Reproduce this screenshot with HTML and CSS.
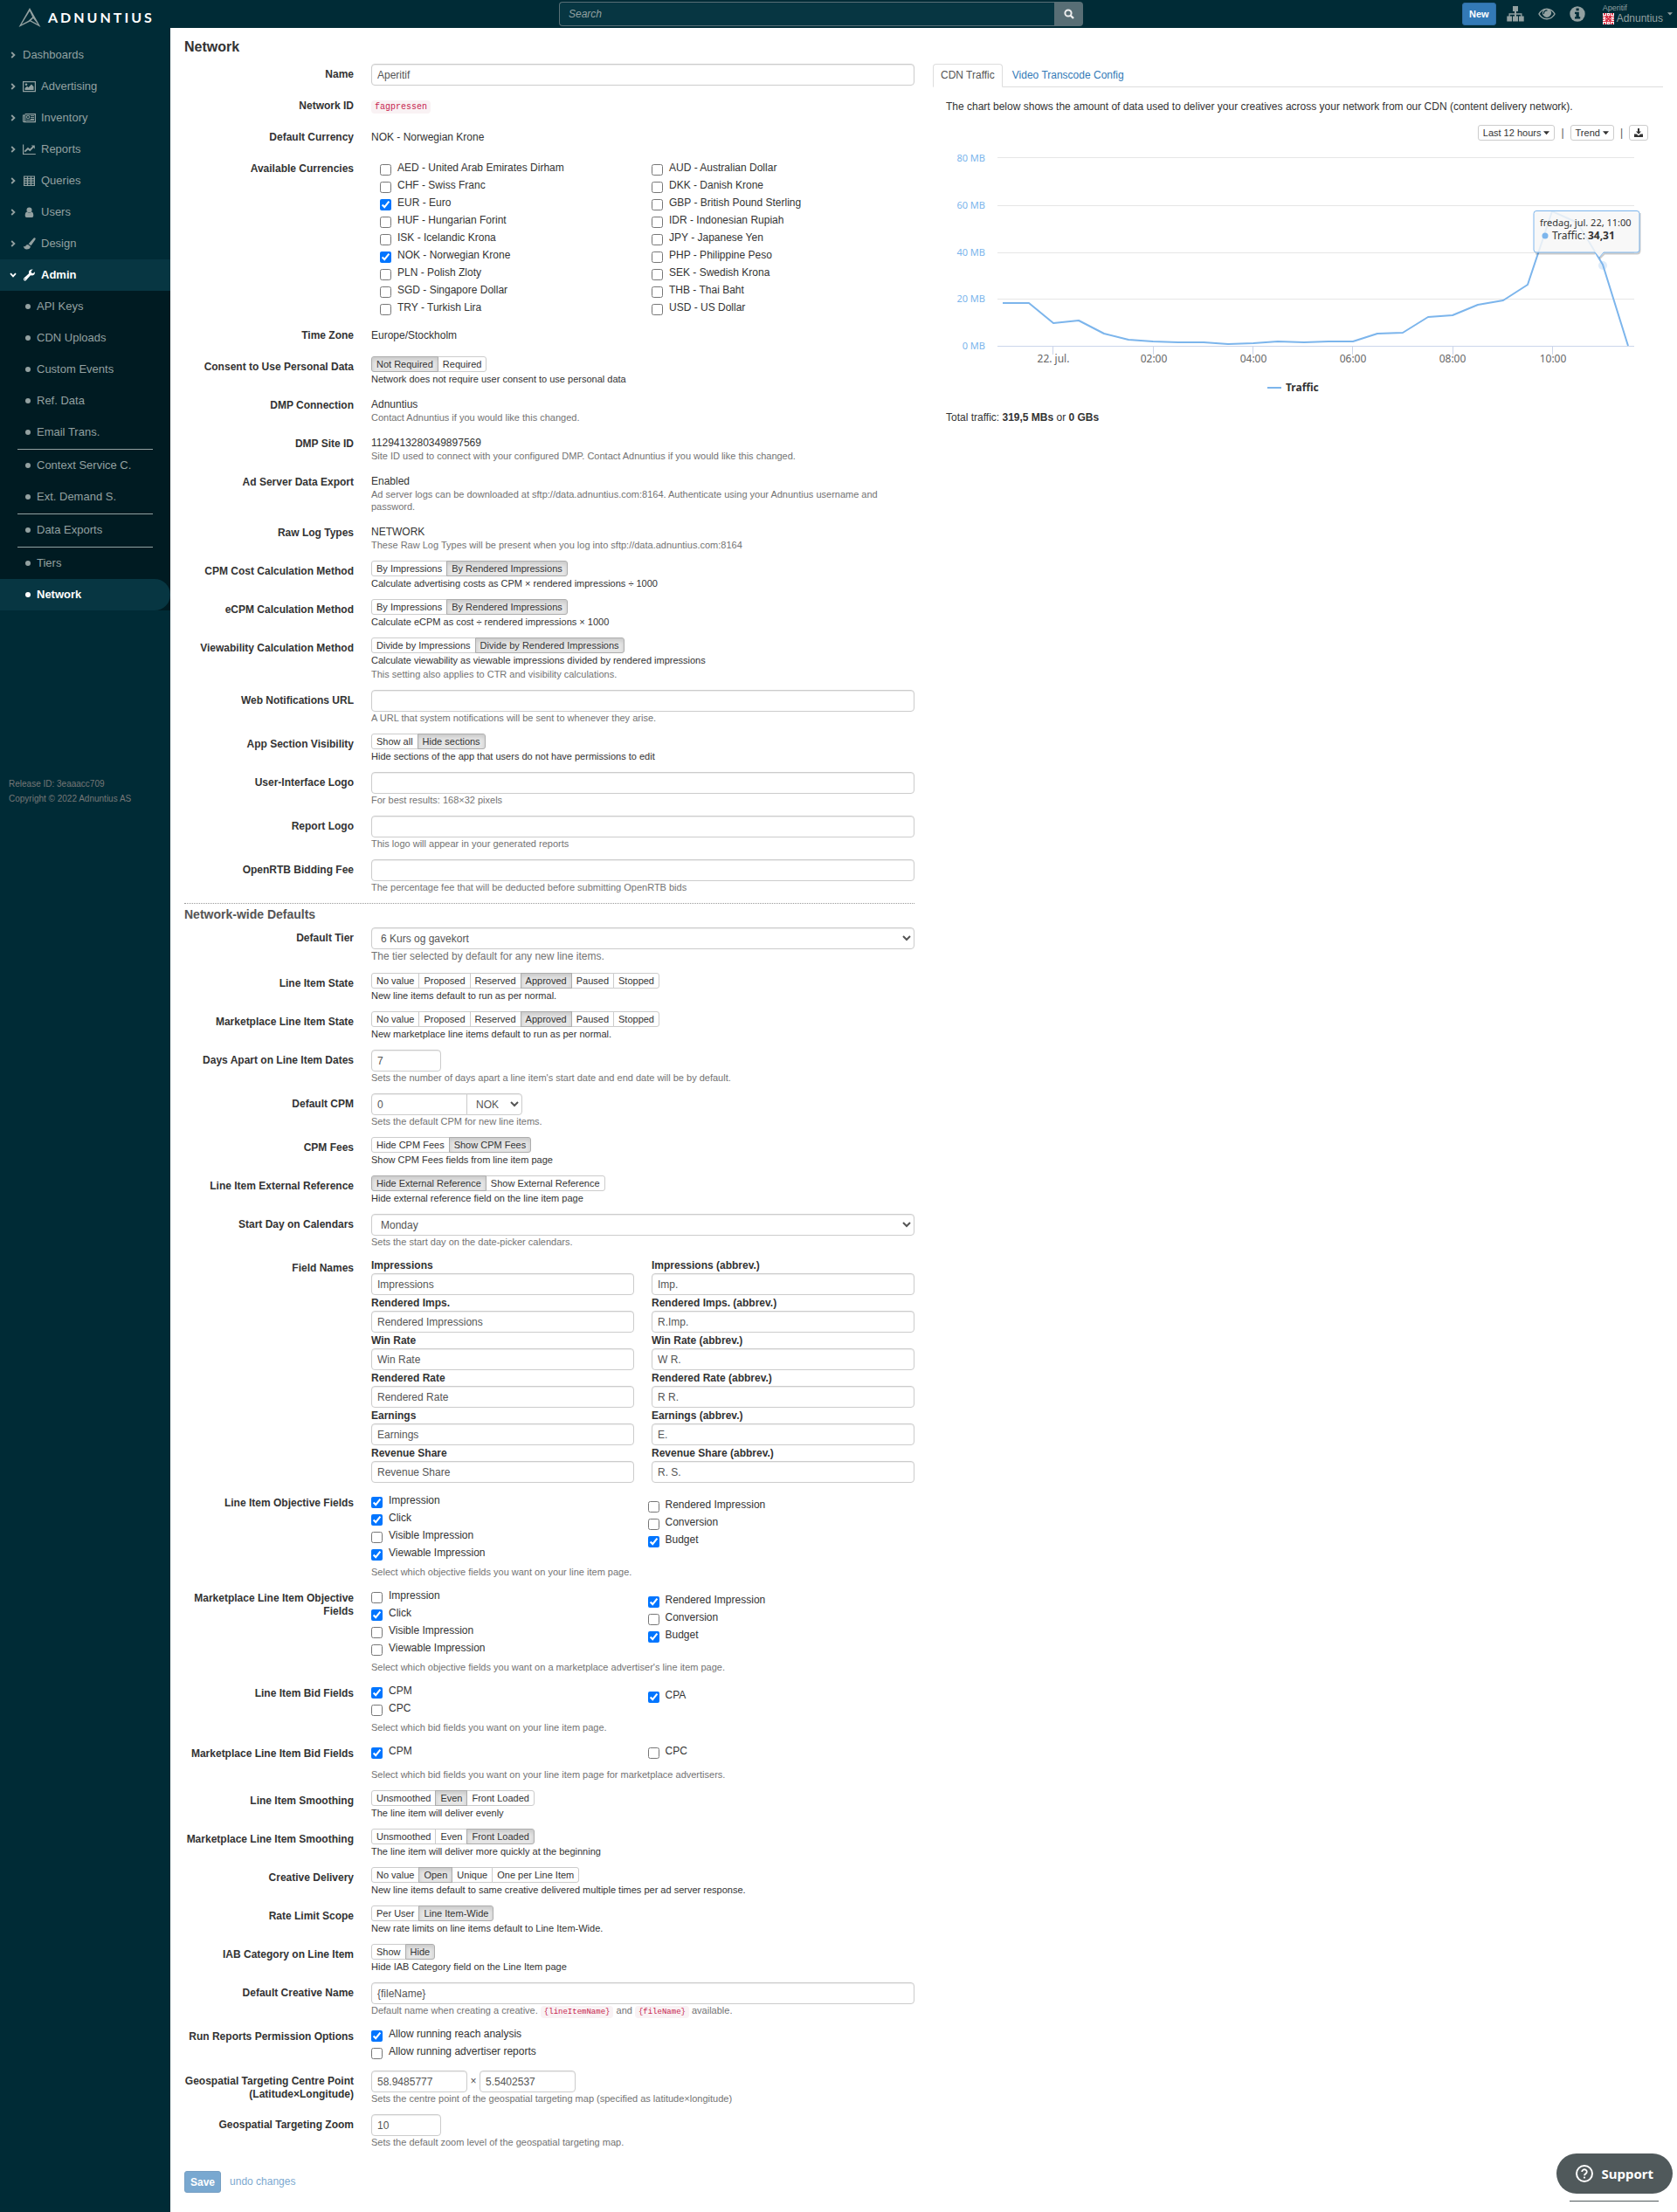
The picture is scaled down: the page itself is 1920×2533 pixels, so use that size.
FILE: index.html
```html
<!DOCTYPE html>
<html lang="en">
<head>
<meta charset="utf-8">
<title>Network - Adnuntius</title>
<meta name="viewport" content="width=device-width, initial-scale=1">
<link rel="stylesheet" href="styles.css">
</head>
<body>
<svg class="defs" aria-hidden="true">
  <symbol id="chev" viewBox="0 0 6 8"><path d="M1.2 1 L4.4 4 L1.2 7" fill="none" stroke="currentColor" stroke-width="1.8"/></symbol>
  <symbol id="caret" viewBox="0 0 8 5"><path d="M0 0h8L4 4.5z" fill="currentColor"/></symbol>
</svg>

<header class="topbar">
  <a class="brand" href="#">
    <svg class="brand-mark" viewBox="0 0 28 24" aria-hidden="true"><path d="M14 1 L1.500 23 L14.500 16.500 L26.500 23 Z M14 4.800 L4.600 20 L12.500 15.800 L17.200 11.400 Z M18 13 L15.400 15.400 L23.400 19.800 Z" fill="#93a1a1" fill-rule="evenodd"/></svg>
    <span class="brand-name">ADNUNTIUS</span>
  </a>
  <form class="search" role="search">
    <input class="search-input" type="text" placeholder="Search" aria-label="Search">
    <button class="search-btn" type="button" aria-label="Search"><svg width="12" height="12" viewBox="0 0 12 12" aria-hidden="true"><circle cx="5" cy="5" r="3.600" fill="none" stroke="currentColor" stroke-width="2"/><path d="M7.500 7.500 L11 11" stroke="currentColor" stroke-width="2.400"/></svg></button>
  </form>
  <nav class="tools" aria-label="Tools">
    <button class="btn-new" type="button">New</button>
    <a class="tool" href="#" aria-label="Site map"><svg width="20" height="18" viewBox="0 0 20 18" aria-hidden="true"><path fill="currentColor" d="M7 0h6v6h-2v2.300h6.500v3.200H19.700V17.500H14v-6h2.200V9.700H11v1.800h2V17.500H7V11.500h2V9.700H3.800v1.800H6V17.500H.3V11.500H2.500V8.300H9V6H7z"/></svg></a>
    <a class="tool" href="#" aria-label="Preview"><svg width="20" height="14" viewBox="0 0 20 14" aria-hidden="true"><path fill="currentColor" fill-rule="evenodd" d="M10 .5C5.500 .5 2 3.500 .2 7c1.800 3.500 5.300 6.500 9.800 6.500S18 10.500 19.800 7C18 3.500 14.500 .5 10 .5zM10 12C6.500 12 3.500 10 1.800 7c1-1.700 2.300-3 4-3.900A5 5 0 1 0 14.200 3.100c1.700.9 3 2.200 4 3.900-1.700 3-4.700 5-8.200 5zM10 2.300a.6.600 0 1 1 0 1.200C8.300 3.500 7 4.800 7 6.500a.6.600 0 1 1-1.200 0C5.800 4.200 7.700 2.300 10 2.300z"/></svg></a>
    <a class="tool" href="#" aria-label="Information"><svg width="18" height="18" viewBox="0 0 18 18" aria-hidden="true"><circle cx="9" cy="9" r="8.700" fill="currentColor"/><path fill="#002b36" d="M7.500 2.600h3.200v2.700H7.500zM6 6.700h4.800v5.500h1.400v2.300H6v-2.300h1.400V9H6z"/></svg></a>
    <a class="account" href="#">
      <span class="account-text">
        <span class="account-net">Aperitif</span>
        <span class="account-user"><svg width="13" height="13" viewBox="0 0 13 13" aria-hidden="true"><path fill="#fff" d="M0 0h13v13H0z"/><g fill="#d9364a"><path d="M3 3h7v7H3z"/><path d="M1 0h2v2H1zM4 0h1v3H4zM8 0h1v3H8zM10 0h2v2h-2zM0 3h3v1H0zM10 3h3v1h-3zM0 5h2v1H0zM11 5h2v1h-2zM0 7h2v1H0zM11 7h2v1h-2zM0 9h3v1H0zM10 9h3v1h-3zM1 11h2v2H1zM4 10h1v3H4zM8 10h1v3H8zM10 11h2v2h-2zM6 1h1v1H6zM6 11h1v1H6z"/></g><path fill="#fff" d="M6 4h1v1H6zM4 6h1v1H4zM8 6h1v1H8zM6 8h1v1H6z" opacity=".8"/></svg>Adnuntius</span>
      </span>
      <svg class="account-caret" width="6" height="4" aria-hidden="true"><use href="#caret"/></svg>
    </a>
  </nav>
</header>

<div class="shell">
<aside class="sidebar">
  <nav aria-label="Main">
  <ul class="menu">
    <li><a href="#"><svg class="chev"><use href="#chev"/></svg>Dashboards</a></li>
    <li><a href="#"><svg class="chev"><use href="#chev"/></svg><svg class="ico" viewBox="0 0 15 14"><path d="M.6 1.600h13.800v11H.6z" fill="none" stroke="currentColor" stroke-width="1.200"/><circle cx="4" cy="4.800" r="1.300" fill="currentColor"/><path fill="currentColor" d="M2.500 11V9L5 6.700l1.500 1.500L10 4.500l2.500 2.700V11z"/></svg>Advertising</a></li>
    <li><a href="#"><svg class="chev"><use href="#chev"/></svg><svg class="ico" viewBox="0 0 15 14"><path d="M2.600 2.600h11.800v9H1.600Q.6 11.600 .6 10.600V4h2v7" fill="none" stroke="currentColor" stroke-width="1.200"/><path d="M4.600 4.600h3v2.800h-3zM9 4.600h4M9 6.600h4M9 8.400h4M4 9.600h9" fill="none" stroke="currentColor"/></svg>Inventory</a></li>
    <li><a href="#"><svg class="chev"><use href="#chev"/></svg><svg class="ico" viewBox="0 0 15 14"><path d="M.6 1.500v11h14.200" fill="none" stroke="currentColor" stroke-width="1.200"/><path d="M2.300 9.700L6 6l2.300 2L12 4.200" fill="none" stroke="currentColor" stroke-width="1.900"/><path fill="currentColor" d="M9.800 2.500h4v4z"/></svg>Reports</a></li>
    <li><a href="#"><svg class="chev"><use href="#chev"/></svg><svg class="ico" viewBox="0 0 15 14"><path d="M1.600 2h11.800v10.500H1.600zM1.600 4.600h11.800M1.600 7.200h11.800M1.600 9.800h11.800M5.500 2v10.500M9.500 2v10.500" fill="none" stroke="currentColor" stroke-width="1.200"/></svg>Queries</a></li>
    <li><a href="#"><svg class="chev"><use href="#chev"/></svg><svg class="ico" viewBox="0 0 15 14"><circle cx="7.500" cy="4.500" r="3" fill="currentColor"/><path fill="currentColor" d="M5 6.600Q2.700 7 2.700 11q0 2 1.800 2h6q1.800 0 1.800-2Q12.300 7 10 6.600Q7.500 9 5 6.600z"/></svg>Users</a></li>
    <li><a href="#"><svg class="chev"><use href="#chev"/></svg><svg class="ico" viewBox="0 0 15 14"><path fill="currentColor" d="M14.300.4q.8.800 0 2L9.500 9.300 6.700 7.200 12.700.6q.8-.7 1.600-.2zM6 7.900l2.900 2.300Q8.500 13.500 4.500 13.500 1.300 13.400 .8 9.800q1.400 1 2.200.2Q4 8 6 7.900z"/></svg>Design</a></li>
    <li class="open"><a href="#"><svg class="chev down"><use href="#chev"/></svg><svg class="ico" viewBox="0 0 15 14"><path fill="currentColor" fill-rule="evenodd" d="M14 3.200Q14.200 8 9 7.300L3.600 13.200Q2.500 14 1.400 12.900T1.300 10.500L7 5.300Q6.200 .3 11.700.5L9.600 2.600 9.900 4.600 11.900 4.900zM2.700 11a.7.700 0 1 0 .1 1.200z"/></svg>Admin</a>
      <ul class="submenu">
        <li><a href="#">API Keys</a></li>
        <li><a href="#">CDN Uploads</a></li>
        <li><a href="#">Custom Events</a></li>
        <li><a href="#">Ref. Data</a></li>
        <li class="ruled"><a href="#">Email Trans.</a></li>
        <li><a href="#">Context Service C.</a></li>
        <li class="ruled"><a href="#">Ext. Demand S.</a></li>
        <li class="ruled"><a href="#">Data Exports</a></li>
        <li><a href="#">Tiers</a></li>
        <li class="current"><a href="#" aria-current="page">Network</a></li>
      </ul>
    </li>
  </ul>
  </nav>
  <p class="release">Release ID: 3eaaacc709<br>Copyright © 2022 Adnuntius AS</p>
</aside>

<main class="main">
<h1>Network</h1>
<div class="columns">
<form class="form">
  <div class="row"><label class="name" for="f-name">Name</label><div><input id="f-name" class="text" type="text" value="Aperitif"></div></div>
  <div class="row"><span class="name">Network ID</span><div class="static"><code>fagpressen</code></div></div>
  <div class="row"><span class="name">Default Currency</span><div class="static">NOK - Norwegian Krone</div></div>
  <div class="row"><span class="name">Available Currencies</span>
    <div class="currencies">
      <label class="check"><input type="checkbox">AED - United Arab Emirates Dirham</label>
      <label class="check"><input type="checkbox">AUD - Australian Dollar</label>
      <label class="check"><input type="checkbox">CHF - Swiss Franc</label>
      <label class="check"><input type="checkbox">DKK - Danish Krone</label>
      <label class="check"><input type="checkbox" checked>EUR - Euro</label>
      <label class="check"><input type="checkbox">GBP - British Pound Sterling</label>
      <label class="check"><input type="checkbox">HUF - Hungarian Forint</label>
      <label class="check"><input type="checkbox">IDR - Indonesian Rupiah</label>
      <label class="check"><input type="checkbox">ISK - Icelandic Krona</label>
      <label class="check"><input type="checkbox">JPY - Japanese Yen</label>
      <label class="check"><input type="checkbox" checked>NOK - Norwegian Krone</label>
      <label class="check"><input type="checkbox">PHP - Philippine Peso</label>
      <label class="check"><input type="checkbox">PLN - Polish Zloty</label>
      <label class="check"><input type="checkbox">SEK - Swedish Krona</label>
      <label class="check"><input type="checkbox">SGD - Singapore Dollar</label>
      <label class="check"><input type="checkbox">THB - Thai Baht</label>
      <label class="check"><input type="checkbox">TRY - Turkish Lira</label>
      <label class="check"><input type="checkbox">USD - US Dollar</label>
    </div></div>
  <div class="row"><span class="name">Time Zone</span><div class="static">Europe/Stockholm</div></div>
  <div class="row"><span class="name">Consent to Use Personal Data</span><div>
    <div class="seg" role="group" aria-label="Consent to Use Personal Data"><button type="button" class="on" aria-pressed="true">Not Required</button><button type="button">Required</button></div>
    <p class="desc">Network does not require user consent to use personal data</p></div></div>
  <div class="row"><span class="name">DMP Connection</span><div><div class="value">Adnuntius</div><p class="help">Contact Adnuntius if you would like this changed.</p></div></div>
  <div class="row"><span class="name">DMP Site ID</span><div><div class="value">1129413280349897569</div><p class="help">Site ID used to connect with your configured DMP. Contact Adnuntius if you would like this changed.</p></div></div>
  <div class="row"><span class="name">Ad Server Data Export</span><div><div class="value">Enabled</div><p class="help">Ad server logs can be downloaded at sftp://data.adnuntius.com:8164. Authenticate using your Adnuntius username and password.</p></div></div>
  <div class="row"><span class="name">Raw Log Types</span><div><div class="value">NETWORK</div><p class="help">These Raw Log Types will be present when you log into sftp://data.adnuntius.com:8164</p></div></div>
  <div class="row"><span class="name">CPM Cost Calculation Method</span><div>
    <div class="seg" role="group" aria-label="CPM Cost Calculation Method"><button type="button">By Impressions</button><button type="button" class="on" aria-pressed="true">By Rendered Impressions</button></div>
    <p class="desc">Calculate advertising costs as CPM × rendered impressions ÷ 1000</p></div></div>
  <div class="row"><span class="name">eCPM Calculation Method</span><div>
    <div class="seg" role="group" aria-label="eCPM Calculation Method"><button type="button">By Impressions</button><button type="button" class="on" aria-pressed="true">By Rendered Impressions</button></div>
    <p class="desc">Calculate eCPM as cost ÷ rendered impressions × 1000</p></div></div>
  <div class="row"><span class="name">Viewability Calculation Method</span><div>
    <div class="seg" role="group" aria-label="Viewability Calculation Method"><button type="button">Divide by Impressions</button><button type="button" class="on" aria-pressed="true">Divide by Rendered Impressions</button></div>
    <p class="desc">Calculate viewability as viewable impressions divided by rendered impressions</p>
    <p class="help extra">This setting also applies to CTR and visibility calculations.</p></div></div>
  <div class="row"><label class="name" for="f-url">Web Notifications URL</label><div><input id="f-url" class="text" type="text"><p class="help">A URL that system notifications will be sent to whenever they arise.</p></div></div>
  <div class="row"><span class="name">App Section Visibility</span><div>
    <div class="seg" role="group" aria-label="App Section Visibility"><button type="button">Show all</button><button type="button" class="on" aria-pressed="true">Hide sections</button></div>
    <p class="desc">Hide sections of the app that users do not have permissions to edit</p></div></div>
  <div class="row"><label class="name" for="f-uilogo">User-Interface Logo</label><div><input id="f-uilogo" class="text" type="text"><p class="help">For best results: 168×32 pixels</p></div></div>
  <div class="row"><label class="name" for="f-replogo">Report Logo</label><div><input id="f-replogo" class="text" type="text"><p class="help">This logo will appear in your generated reports</p></div></div>
  <div class="row"><label class="name" for="f-fee">OpenRTB Bidding Fee</label><div><input id="f-fee" class="text" type="text"><p class="help">The percentage fee that will be deducted before submitting OpenRTB bids</p></div></div>

  <h2>Network-wide Defaults</h2>
  <div class="row"><label class="name" for="f-tier">Default Tier</label><div><select id="f-tier" class="text"><option>6 Kurs og gavekort</option></select><p class="help large">The tier selected by default for any new line items.</p></div></div>
  <div class="row"><span class="name">Line Item State</span><div>
    <div class="seg" role="group" aria-label="Line Item State"><button type="button">No value</button><button type="button">Proposed</button><button type="button">Reserved</button><button type="button" class="on" aria-pressed="true">Approved</button><button type="button">Paused</button><button type="button">Stopped</button></div>
    <p class="desc">New line items default to run as per normal.</p></div></div>
  <div class="row"><span class="name">Marketplace Line Item State</span><div>
    <div class="seg" role="group" aria-label="Marketplace Line Item State"><button type="button">No value</button><button type="button">Proposed</button><button type="button">Reserved</button><button type="button" class="on" aria-pressed="true">Approved</button><button type="button">Paused</button><button type="button">Stopped</button></div>
    <p class="desc">New marketplace line items default to run as per normal.</p></div></div>
  <div class="row"><label class="name" for="f-days">Days Apart on Line Item Dates</label><div><input id="f-days" class="text short" type="text" value="7"><p class="help">Sets the number of days apart a line item's start date and end date will be by default.</p></div></div>
  <div class="row"><label class="name" for="f-cpm">Default CPM</label><div><div class="joined"><input id="f-cpm" class="text medium" type="text" value="0"><select class="text" aria-label="Currency"><option>NOK</option></select></div><p class="help">Sets the default CPM for new line items.</p></div></div>
  <div class="row"><span class="name">CPM Fees</span><div>
    <div class="seg" role="group" aria-label="CPM Fees"><button type="button">Hide CPM Fees</button><button type="button" class="on" aria-pressed="true">Show CPM Fees</button></div>
    <p class="desc">Show CPM Fees fields from line item page</p></div></div>
  <div class="row"><span class="name">Line Item External Reference</span><div>
    <div class="seg" role="group" aria-label="Line Item External Reference"><button type="button" class="on" aria-pressed="true">Hide External Reference</button><button type="button">Show External Reference</button></div>
    <p class="desc">Hide external reference field on the line item page</p></div></div>
  <div class="row"><label class="name" for="f-start">Start Day on Calendars</label><div><select id="f-start" class="text"><option>Monday</option></select><p class="help">Sets the start day on the date-picker calendars.</p></div></div>
  <div class="row"><span class="name">Field Names</span>
    <div class="fields">
      <label>Impressions<input class="text" type="text" value="Impressions"></label>
      <label>Impressions (abbrev.)<input class="text" type="text" value="Imp."></label>
      <label>Rendered Imps.<input class="text" type="text" value="Rendered Impressions"></label>
      <label>Rendered Imps. (abbrev.)<input class="text" type="text" value="R.Imp."></label>
      <label>Win Rate<input class="text" type="text" value="Win Rate"></label>
      <label>Win Rate (abbrev.)<input class="text" type="text" value="W R."></label>
      <label>Rendered Rate<input class="text" type="text" value="Rendered Rate"></label>
      <label>Rendered Rate (abbrev.)<input class="text" type="text" value="R R."></label>
      <label>Earnings<input class="text" type="text" value="Earnings"></label>
      <label>Earnings (abbrev.)<input class="text" type="text" value="E."></label>
      <label>Revenue Share<input class="text" type="text" value="Revenue Share"></label>
      <label>Revenue Share (abbrev.)<input class="text" type="text" value="R. S."></label>
    </div></div>
  <div class="row"><span class="name">Line Item Objective Fields</span><div>
    <div class="pair">
      <div><label class="check"><input type="checkbox" checked>Impression</label><label class="check"><input type="checkbox" checked>Click</label><label class="check"><input type="checkbox">Visible Impression</label><label class="check"><input type="checkbox" checked>Viewable Impression</label></div>
      <div class="lowered"><label class="check"><input type="checkbox">Rendered Impression</label><label class="check"><input type="checkbox">Conversion</label><label class="check"><input type="checkbox" checked>Budget</label></div>
    </div>
    <p class="help">Select which objective fields you want on your line item page.</p></div></div>
  <div class="row"><span class="name">Marketplace Line Item Objective Fields</span><div>
    <div class="pair">
      <div><label class="check"><input type="checkbox">Impression</label><label class="check"><input type="checkbox" checked>Click</label><label class="check"><input type="checkbox">Visible Impression</label><label class="check"><input type="checkbox">Viewable Impression</label></div>
      <div class="lowered"><label class="check"><input type="checkbox" checked>Rendered Impression</label><label class="check"><input type="checkbox">Conversion</label><label class="check"><input type="checkbox" checked>Budget</label></div>
    </div>
    <p class="help">Select which objective fields you want on a marketplace advertiser's line item page.</p></div></div>
  <div class="row"><span class="name">Line Item Bid Fields</span><div>
    <div class="pair">
      <div><label class="check"><input type="checkbox" checked>CPM</label><label class="check"><input type="checkbox">CPC</label></div>
      <div class="lowered"><label class="check"><input type="checkbox" checked>CPA</label></div>
    </div>
    <p class="help">Select which bid fields you want on your line item page.</p></div></div>
  <div class="row"><span class="name">Marketplace Line Item Bid Fields</span><div>
    <div class="pair">
      <div><label class="check"><input type="checkbox" checked>CPM</label></div>
      <div><label class="check"><input type="checkbox">CPC</label></div>
    </div>
    <p class="help">Select which bid fields you want on your line item page for marketplace advertisers.</p></div></div>
  <div class="row"><span class="name">Line Item Smoothing</span><div>
    <div class="seg" role="group" aria-label="Line Item Smoothing"><button type="button">Unsmoothed</button><button type="button" class="on" aria-pressed="true">Even</button><button type="button">Front Loaded</button></div>
    <p class="desc">The line item will deliver evenly</p></div></div>
  <div class="row"><span class="name">Marketplace Line Item Smoothing</span><div>
    <div class="seg" role="group" aria-label="Marketplace Line Item Smoothing"><button type="button">Unsmoothed</button><button type="button">Even</button><button type="button" class="on" aria-pressed="true">Front Loaded</button></div>
    <p class="desc">The line item will deliver more quickly at the beginning</p></div></div>
  <div class="row"><span class="name">Creative Delivery</span><div>
    <div class="seg" role="group" aria-label="Creative Delivery"><button type="button">No value</button><button type="button" class="on" aria-pressed="true">Open</button><button type="button">Unique</button><button type="button">One per Line Item</button></div>
    <p class="desc">New line items default to same creative delivered multiple times per ad server response.</p></div></div>
  <div class="row"><span class="name">Rate Limit Scope</span><div>
    <div class="seg" role="group" aria-label="Rate Limit Scope"><button type="button">Per User</button><button type="button" class="on" aria-pressed="true">Line Item-Wide</button></div>
    <p class="desc">New rate limits on line items default to Line Item-Wide.</p></div></div>
  <div class="row"><span class="name">IAB Category on Line Item</span><div>
    <div class="seg" role="group" aria-label="IAB Category on Line Item"><button type="button">Show</button><button type="button" class="on" aria-pressed="true">Hide</button></div>
    <p class="desc">Hide IAB Category field on the Line Item page</p></div></div>
  <div class="row"><label class="name" for="f-creative">Default Creative Name</label><div><input id="f-creative" class="text" type="text" value="{fileName}"><p class="help">Default name when creating a creative. <code>{lineItemName}</code> and <code>{fileName}</code> available.</p></div></div>
  <div class="row"><span class="name">Run Reports Permission Options</span><div><label class="check"><input type="checkbox" checked>Allow running reach analysis</label><label class="check"><input type="checkbox">Allow running advertiser reports</label></div></div>
  <div class="row"><label class="name" for="f-lat">Geospatial Targeting Centre Point (Latitude×Longitude)</label><div><div class="coords"><input id="f-lat" class="text medium" type="text" value="58.9485777"><span>×</span><input class="text medium" type="text" value="5.5402537" aria-label="Longitude"></div><p class="help">Sets the centre point of the geospatial targeting map (specified as latitude×longitude)</p></div></div>
  <div class="row"><label class="name" for="f-zoom">Geospatial Targeting Zoom</label><div><input id="f-zoom" class="text short" type="text" value="10"><p class="help">Sets the default zoom level of the geospatial targeting map.</p></div></div>
  <div class="actions"><button class="save" type="button">Save</button><a href="#">undo changes</a></div>
</form>

<section class="panel">
  <div class="tabs"><a class="tab active" href="#">CDN Traffic</a><a class="tab" href="#">Video Transcode Config</a></div>
  <div class="pane">
    <p>The chart below shows the amount of data used to deliver your creatives across your network from our CDN (content delivery network).</p>
    <div class="chart-tools">
      <button class="mini" type="button">Last 12 hours <svg width="7" height="5"><use href="#caret"/></svg></button><span>|</span>
      <button class="mini" type="button">Trend <svg width="7" height="5"><use href="#caret"/></svg></button><span>|</span>
      <button class="mini" type="button" aria-label="Download"><svg width="10" height="10" viewBox="0 0 10 10"><path fill="currentColor" d="M4 0h2v3.500h2L5 6.800 2 3.500h2zM0 6.500h2.800L5 8.500l2.200-2H10V10H0z"/></svg></button>
    </div>
    <svg class="chart" viewBox="0 0 806 298" role="img" aria-label="Traffic over the last 12 hours">
      <g class="grid"><path d="M59 14.500H788M59 69.500H788M59 123.500H788M59 176.500H788"/></g>
      <path class="axis" d="M59 230.500H788M122.500 231v9M237.500 231v9M351.500 231v9M465.500 231v9M580.500 231v9M694.500 231v9"/>
      <g class="ylab"><text x="45" y="19">80 MB</text><text x="45" y="73">60 MB</text><text x="45" y="127">40 MB</text><text x="45" y="180">20 MB</text><text x="45" y="234">0 MB</text></g>
      <g class="xlab"><text x="123" y="249">22. jul.</text><text x="238" y="249">02:00</text><text x="352" y="249">04:00</text><text x="466" y="249">06:00</text><text x="580" y="249">08:00</text><text x="695" y="249">10:00</text></g>
      <polyline class="line" points="65,181 95,181 123,204 152,201 181,216 209,223 237,225 266,226 295,226 323,228 352,227 380,225 410,226 438,225 466,225 494,216 523,215 552,197 580,195 609,183 638,178 666,160 694,76 723,89 752,137 781,230"/>
      <circle cx="752" cy="138" r="5" fill="#7cb5ec" fill-opacity=".25"/>
      <path class="tip-shade" d="M794.500 78V121Q794.500 124.500 791 124.500H754L748.500 130M743 124.500H675"/>
      <path class="tip" d="M676 75.500H791Q794 75.500 794 78.500V120Q794 123 791 123H753L748 129 743 123H676Q673 123 673 120V78.500Q673 75.500 676 75.500Z"/>
      <text class="tip-date" x="680" y="93">fredag, jul. 22, 11:00</text>
      <circle cx="686" cy="104" r="3.500" fill="#7cb5ec"/>
      <text class="tip-value" x="694" y="108">Traffic: <tspan font-weight="bold">34,31</tspan></text>
      <path class="line" d="M368 278h16"/>
      <text class="legend" x="389" y="282">Traffic</text>
    </svg>
    <p>Total traffic: <b>319,5 MBs</b> or <b>0 GBs</b></p>
  </div>
</section>
</div>
</main>
</div>

<button class="support" type="button"><svg width="20" height="20" viewBox="0 0 20 20" aria-hidden="true"><circle cx="10" cy="10" r="9" fill="none" stroke="#fff" stroke-width="2"/><path d="M7.200 8a2.800 2.600 0 1 1 4.300 2.100Q10 11 10 12.200" fill="none" stroke="#fff" stroke-width="1.800"/><circle cx="10" cy="14.600" r="1.100" fill="#fff"/></svg>Support</button>
<div class="support-edge" aria-hidden="true"></div>
</body>
</html>
```
FILE: styles.css
```css
* { box-sizing: border-box; }

body {
  margin: 0;
  background: #fff;
  color: #333;
  font: 12px/17px "Liberation Sans", Arial, sans-serif;
  position: relative;
  min-height: 100vh;
  display: flex;
  flex-direction: column;
}

p, ul, h1, h2 { margin: 0; padding: 0; }
ul { list-style: none; }
a { color: #337ab7; text-decoration: none; }
button, input, select { font-family: inherit; margin: 0; }
.defs { display: none; }

/* top bar */
.topbar {
  height: 32px;
  background: #002b36;
  color: #93a1a1;
  display: grid;
  grid-template-columns: 16fr 600px 17fr;
  align-items: center;
}
.brand { display: flex; align-items: center; gap: 7px; padding: 8px 0 0 20px; }
.brand-mark { width: 28px; height: 24px; }
.brand-name { color: #fff; font: bold 16px/24px Lato, sans-serif; letter-spacing: 3px; }
.search { display: flex; height: 28px; }
.search-input {
  flex: 1;
  border: 1px solid #586e75;
  border-right: 0;
  border-radius: 4px 0 0 4px;
  background: #073642;
  color: #eee8d5;
  padding: 0 10px;
  font-size: 12px;
  font-style: italic;
}
.search-input::placeholder { color: #93a1a1; opacity: 1; }
.search-btn {
  width: 33px;
  border: 0;
  border-radius: 0 4px 4px 0;
  background: #586e75;
  color: #eee;
  display: flex;
  align-items: center;
  justify-content: center;
}
.tools { display: flex; align-items: center; justify-content: flex-end; gap: 16px; padding-right: 5px; }
.btn-new {
  height: 26px;
  border: 1px solid #2e6da4;
  border-radius: 3px;
  background: #337ab7;
  color: #fff;
  font-size: 11px;
  font-weight: bold;
  padding: 0 7px;
}
.tool { color: #93a1a1; display: flex; }
.btn-new + .tool { margin-left: -4px; }
.account { display: flex; align-items: center; gap: 5px; color: #93a1a1; margin-left: 4px; }
.account-text { display: flex; flex-direction: column; }
.account-net { font-size: 9px; line-height: 10px; }
.account-user { display: flex; align-items: center; gap: 3px; line-height: 14px; }

/* sidebar */
.shell { display: flex; flex: 1; }
.sidebar { width: 195px; flex: none; background: #002b36; padding-top: 13px; }
.menu a { color: #93a1a1; font-size: 13px; line-height: 36px; height: 36px; display: flex; align-items: center; }
.menu > li > a { padding-left: 12px; }
.chev { width: 6px; height: 8px; margin-right: 8px; }
.chev.down { transform: rotate(90deg); }
.ico { width: 15px; height: 14px; margin-right: 6px; }
.menu .open > a { background: #073642; color: #fff; font-weight: bold; }
.submenu { background: #001b22; }
.submenu a { padding-left: 29px; }
.submenu a::before { content: ""; width: 6px; height: 6px; border-radius: 50%; background: currentColor; margin-right: 7px; }
.submenu .ruled::after { content: ""; display: block; height: 1px; margin: 1px 20px 0; background: #93a1a1; }
.submenu .current a { background: #073642; color: #fff; font-weight: bold; border-radius: 0 18px 18px 0; }
.release { color: #777; font-size: 10px; line-height: 17px; padding: 190px 10px 0; }

/* page */
.main { flex: 1; min-width: 0; padding: 11px 16px 20px; }
h1 { font-size: 16px; line-height: 22px; margin-bottom: 8px; }
.columns { display: grid; grid-template-columns: 1fr 1fr; column-gap: 21px; align-items: start; }

/* form */
.row { display: grid; grid-template-columns: 194px 1fr; column-gap: 20px; margin-bottom: 11px; }
.name { font-weight: bold; text-align: right; line-height: 15px; padding-top: 5px; height: 25px; }
.text {
  display: block;
  width: 100%;
  height: 25px;
  border: 1px solid #ccc;
  border-radius: 4px;
  background: #fff;
  box-shadow: inset 0 1px 1px rgba(0, 0, 0, .075);
  color: #555;
  font-size: 12px;
  padding: 0 6px;
}
.short { width: 80px; }
.medium { width: 110px; }
.joined { display: flex; }
.joined .medium { border-radius: 4px 0 0 4px; }
.joined select { width: 64px; border-radius: 0 4px 4px 0; margin-left: -1px; }
.coords { display: flex; align-items: center; color: #555; }
.coords span { width: 14px; text-align: center; }
.static { padding-top: 4px; height: 25px; }
.value { padding-top: 4px; line-height: 15px; }
.help, .desc { font-size: 11px; line-height: 14px; }
.help { color: #737373; }
.desc { padding-top: 1px; }
.extra { padding-top: 2px; }
.large { font-size: 12px; line-height: 16px; }
code {
  font: 10px/13px "Liberation Mono", monospace;
  color: #c7254e;
  background: #f9f2f4;
  border-radius: 4px;
  padding: 2px 4px;
}
.help code { font-size: 9px; line-height: 9px; }

.seg { display: flex; height: 18px; }
.seg button, .mini {
  height: 18px;
  border: 1px solid #ccc;
  background: #fff;
  color: #333;
  font-size: 11px;
  line-height: 14px;
  padding: 0 5px;
}
.seg button + button { margin-left: -1px; }
.seg button:first-child { border-radius: 3px 0 0 3px; }
.seg button:last-child { border-radius: 0 3px 3px 0; }
.seg .on { background: #e6e6e6; border-color: #adadad; box-shadow: inset 0 3px 5px rgba(0, 0, 0, .125); z-index: 1; }

.check { display: flex; align-items: center; height: 20px; line-height: 17px; padding-bottom: 1px; }
.check input { width: 13px; height: 13px; margin: 3px 7px 0 0; }
.currencies { display: grid; grid-template-columns: 1fr 1fr; }
.currencies .check { padding: 3px 0 0 10px; }
.pair { display: grid; grid-template-columns: 1fr 1fr; column-gap: 11px; min-height: 25px; margin-bottom: 4px; }
.pair .lowered { padding-top: 5px; }
.fields { display: grid; grid-template-columns: 1fr 1fr; column-gap: 20px; }
.fields label { font-weight: bold; line-height: 18px; }
.fields .text { font-weight: normal; }

h2 { border-top: 1px dotted #999; padding-top: 2px; font-size: 14px; line-height: 20px; margin-bottom: 5px; color: #555; }

.actions { display: flex; align-items: center; gap: 10px; padding-top: 15px; }
.actions a, .save { opacity: .65; }
.save {
  height: 25px;
  border: 1px solid #2e6da4;
  border-radius: 3px;
  background: #337ab7;
  color: #fff;
  font-size: 12px;
  font-weight: bold;
  padding: 0 6px;
}

/* traffic panel */
.tabs { display: flex; gap: 2px; height: 27px; border-bottom: 1px solid #ddd; }
.tab { height: 27px; line-height: 24px; padding: 0 8px; border: 1px solid transparent; border-radius: 4px 4px 0 0; }
.tab.active { color: #555; background: #fff; border-color: #ddd #ddd #fff; }
.pane { padding: 14px 15px 0; }
.chart-tools { display: flex; align-items: center; justify-content: flex-end; gap: 7px; margin-top: 12px; padding-right: 2px; height: 18px; color: #555; }
.mini { border-radius: 3px; display: flex; align-items: center; gap: 3px; }
.chart { display: block; width: 100%; margin: 5px 0 6px; font-family: "Noto Sans", sans-serif; }
.grid path { stroke: #e6e6e6; }
.axis { stroke: #ccd6eb; fill: none; }
.line { stroke: #7cb5ec; stroke-width: 2; fill: none; stroke-linejoin: round; }
.ylab { font-size: 11px; fill: #7cb5ec; text-anchor: end; }
.xlab { font-size: 12px; fill: #666; text-anchor: middle; }
.tip { fill: #f7f7f7; fill-opacity: .85; stroke: #7cb5ec; }
.tip-shade { fill: none; stroke: #000; stroke-opacity: .2; stroke-width: 2; }
.tip-date { font-size: 11px; fill: #333; }
.tip-value { font-size: 12px; fill: #333; }
.legend { font-size: 12px; font-weight: bold; fill: #333; }

/* support launcher, floating over the page */
.support {
  position: absolute;
  right: 5px;
  bottom: 21px;
  height: 46px;
  border: 0;
  border-radius: 23px;
  background: #50595b;
  color: #fff;
  font: bold 15px/20px "Noto Sans", sans-serif;
  display: flex;
  align-items: center;
  gap: 9px;
  padding: 0 22px;
}
.support-edge { position: absolute; right: 21px; bottom: 12px; width: 102px; height: 1px; background: #50595b; }
```
